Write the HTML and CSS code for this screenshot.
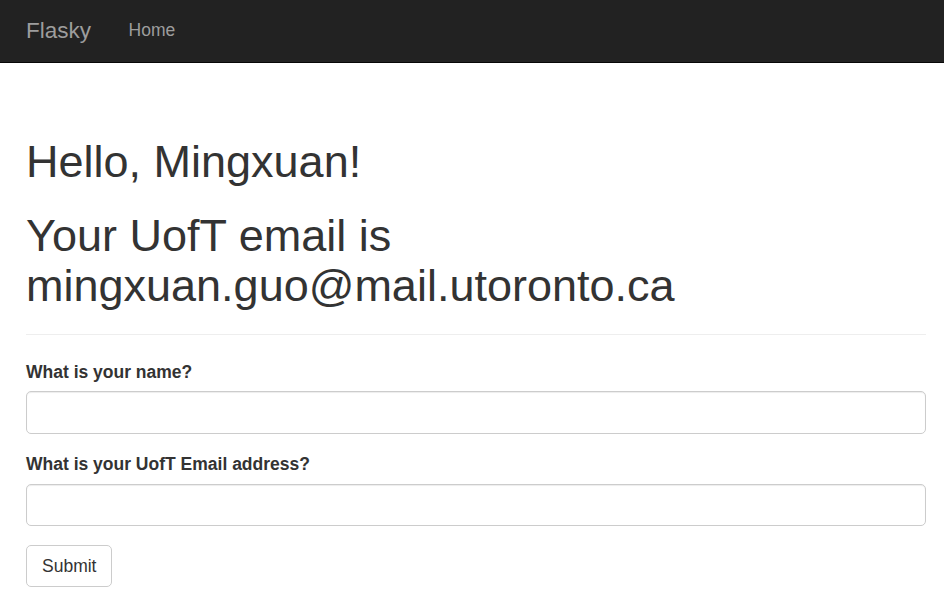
FILE: index.html
```html
<!DOCTYPE html>
<html lang="en">
<head>
<meta charset="utf-8">
<title>Flasky</title>
<link rel="stylesheet" href="styles.css">
</head>
<body>
<nav class="navbar">
  <div class="navbar-inner">
    <a class="brand" href="#">Flasky</a>
    <ul class="nav">
      <li><a class="nav-link" href="#">Home</a></li>
    </ul>
  </div>
</nav>
<main class="container">
  <div class="page-header">
    <h1 class="title">Hello, Mingxuan!</h1>
    <h1 class="title">Your UofT email is mingxuan.guo@mail.utoronto.ca</h1>
  </div>
  <form class="form">
    <div class="form-group">
      <label class="label" for="name">What is your name?</label>
      <input class="input" id="name" type="text">
    </div>
    <div class="form-group">
      <label class="label" for="email">What is your UofT Email address?</label>
      <input class="input" id="email" type="text">
    </div>
    <button class="btn" type="button">Submit</button>
  </form>
</main>
</body>
</html>
```
FILE: styles.css
```css
* { box-sizing: border-box; }
html, body {
  margin: 0;
  padding: 0;
  background: #fff;
  font-family: "Liberation Sans", Arial, sans-serif;
  font-size: 17.5px;
  line-height: 25px;
  color: #333;
}
.navbar {
  background: #222;
  border-bottom: 1px solid #080808;
  height: 62.5px;
}
.navbar-inner {
  display: flex;
  align-items: flex-start;
  padding: 0 7.25px;
}
.brand {
  display: block;
  padding: 17.5px 18.75px 0;
  font-size: 22.5px;
  line-height: 25px;
  color: #9d9d9d;
  text-decoration: none;
}
.nav {
  display: flex;
  list-style: none;
  margin: 0;
  padding: 0;
}
.nav-link {
  display: block;
  padding: 17.5px 18.75px 0;
  font-size: 17.5px;
  line-height: 25px;
  color: #9d9d9d;
  text-decoration: none;
}
.container {
  padding: 0 18px 0 26px;
}
.page-header {
  margin-top: 74px;
  padding-bottom: 11.25px;
  border-bottom: 1px solid #eee;
  margin-bottom: 25px;
}
.title {
  margin: 0 0 12.5px;
  font-size: 45px;
  font-weight: 500;
  line-height: 49.5px;
  color: #333;
}
.title + .title {
  margin-top: 25px;
}
.form-group {
  margin-bottom: 18.75px;
}
.label {
  display: block;
  font-weight: bold;
  margin-bottom: 6.25px;
  line-height: 25px;
}
.input {
  display: block;
  width: 100%;
  height: 42.5px;
  padding: 7.5px 15px;
  font-family: inherit;
  font-size: 17.5px;
  color: #555;
  background: #fff;
  border: 1px solid #ccc;
  border-radius: 5px;
  box-shadow: inset 0 1px 1px rgba(0,0,0,.075);
}
.btn {
  display: inline-block;
  height: 42.5px;
  padding: 7.5px 15px;
  font-family: inherit;
  font-size: 17.5px;
  line-height: 25px;
  color: #333;
  background: #fff;
  border: 1px solid #ccc;
  border-radius: 5px;
}
```
